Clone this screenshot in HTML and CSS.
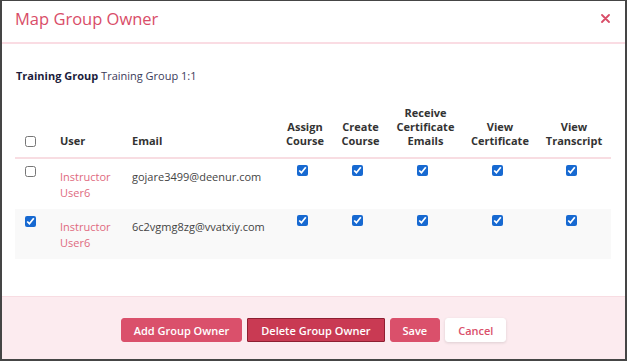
FILE: index.html
```html
<!DOCTYPE html>
<html>

<head>
    <title>Map Group Owner</title>
    <meta charset="utf-8">
    <meta name="viewport" content="width=device-width, initial-scale=1.0">
    <link rel="stylesheet" href="styles.css">
</head>

<body>
    <div class="modal">
        <header class="modal-head">
            <h1>Map Group Owner</h1>
            <button class="luk" aria-label="Close">
                <svg width="9" height="9" viewBox="0 0 9 9">
                    <path d="M1 1 L8 8 M8 1 L1 8" stroke="#d94d68" stroke-width="1.8" stroke-linecap="round" />
                </svg>
            </button>
        </header>

        <section class="modal-body">
            <p class="gruppe"><b>Training Group</b> Training Group 1:1</p>

            <table class="ejere">
                <colgroup>
                    <col class="c-vaelg">
                    <col class="c-bruger">
                    <col class="c-mail">
                    <col class="c-assign">
                    <col class="c-create">
                    <col class="c-receive">
                    <col class="c-cert">
                    <col class="c-trans">
                </colgroup>
                <thead>
                    <tr>
                        <th><input type="checkbox"></th>
                        <th class="venstre">User</th>
                        <th class="venstre">Email</th>
                        <th>Assign<br>Course</th>
                        <th>Create<br>Course</th>
                        <th>Receive<br>Certificate<br>Emails</th>
                        <th>View<br>Certificate</th>
                        <th>View<br>Transcript</th>
                    </tr>
                </thead>
                <tbody>
                    <tr>
                        <td><input type="checkbox"></td>
                        <td class="navn">Instructor<br>User6</td>
                        <td class="mail">gojare3499@deenur.com</td>
                        <td class="ret"><input type="checkbox" checked></td>
                        <td class="ret"><input type="checkbox" checked></td>
                        <td class="ret"><input type="checkbox" checked></td>
                        <td class="ret"><input type="checkbox" checked></td>
                        <td class="ret"><input type="checkbox" checked></td>
                    </tr>
                    <tr class="skygge">
                        <td><input type="checkbox" checked></td>
                        <td class="navn">Instructor<br>User6</td>
                        <td class="mail">6c2vgmg8zg@vvatxiy.com</td>
                        <td class="ret"><input type="checkbox" checked></td>
                        <td class="ret"><input type="checkbox" checked></td>
                        <td class="ret"><input type="checkbox" checked></td>
                        <td class="ret"><input type="checkbox" checked></td>
                        <td class="ret"><input type="checkbox" checked></td>
                    </tr>
                </tbody>
            </table>
        </section>

        <footer class="modal-foot">
            <button class="knap">Add Group Owner</button>
            <button class="knap valgt">Delete Group Owner</button>
            <button class="knap">Save</button>
            <button class="knap hvid">Cancel</button>
        </footer>
    </div>
</body>

</html>
```

FILE: styles.css
```css
* {
    box-sizing: border-box;
}

body {
    margin: 0;
    font-family: 'Open Sans', 'DejaVu Sans', sans-serif;
    font-size: 11px;
    color: #3a3a3a;
}

.modal {
    width: 627px;
    height: 361px;
    border: 2px solid #454545;
    border-top-width: 1px;
    background: white;
    display: flex;
    flex-direction: column;
}

.modal-head {
    height: 43px;
    flex: none;
    display: flex;
    align-items: center;
    justify-content: space-between;
    padding: 0 15px 7px 13px;
    border-bottom: 2px solid #fadce3;
}

.modal-head h1 {
    margin: 0;
    font-size: 16.5px;
    font-weight: 400;
    color: #d94d68;
}

.luk {
    border: none;
    background: none;
    padding: 0;
    width: 9px;
    height: 9px;
    display: flex;
    cursor: pointer;
}

.modal-body {
    padding: 24px 13px 0 13px;
}

.gruppe {
    margin: 0 0 0 1px;
    line-height: 16px;
    color: #3b3b5a;
}

.gruppe b {
    color: #1c1c3c;
}

.ejere {
    width: 596px;
    margin: 14px 0 0 0;
    table-layout: fixed;
    border-collapse: collapse;
}

.c-vaelg { width: 35px; }
.c-bruger { width: 72px; }
.c-mail { width: 155px; }
.c-assign { width: 56px; }
.c-create { width: 55px; }
.c-receive { width: 75px; }
.c-cert { width: 74px; }
.c-trans { width: 74px; }

.ejere th {
    font-weight: 700;
    line-height: 14px;
    color: #333;
    text-align: center;
    vertical-align: bottom;
    padding: 8px 4px 9px 4px;
    white-space: nowrap;
    border-bottom: 2px solid #f8dde2;
}

.ejere th.venstre {
    text-align: left;
    padding-left: 10px;
}

.ejere th:first-child {
    padding-left: 10px;
    padding-bottom: 10px;
}

.ejere td {
    padding: 10px 10px 9px 10px;
    line-height: 15.5px;
    vertical-align: top;
}

.skygge td {
    background-color: #f9f9f9;
}

.navn {
    color: #e06a80;
}

.mail {
    color: #444;
}

.ejere .ret {
    text-align: center;
    padding-left: 0;
    padding-right: 6px;
}

input[type="checkbox"] {
    width: 11px;
    height: 11px;
    margin: -3px 0 0 0;
    accent-color: #1769d1;
    display: block;
}

.ret input[type="checkbox"] {
    margin: -4px auto 0 auto;
}

th input[type="checkbox"] {
    margin: 0;
}

.modal-foot {
    margin-top: auto;
    flex: none;
    height: 63px;
    padding: 21px 0 18px 0;
    background-color: #fcebef;
    border-top: 1px solid #f8dce2;
    display: flex;
    justify-content: center;
    align-items: flex-start;
    gap: 5px;
}

.knap {
    height: 24px;
    padding: 0 12px;
    font-family: 'Open Sans', 'DejaVu Sans', sans-serif;
    font-size: 11px;
    font-weight: 600;
    color: white;
    background-color: #da506b;
    border: 1px solid #da506b;
    border-radius: 3px;
    cursor: pointer;
}

.valgt {
    background-color: #c93a53;
    border-color: #8e1f31;
    padding: 0 13px;
    border-radius: 1px;
}

.hvid {
    background-color: white;
    border-color: white;
    color: #da506b;
    box-shadow: 0 1px 3px rgba(0, 0, 0, 0.12);
}
```
